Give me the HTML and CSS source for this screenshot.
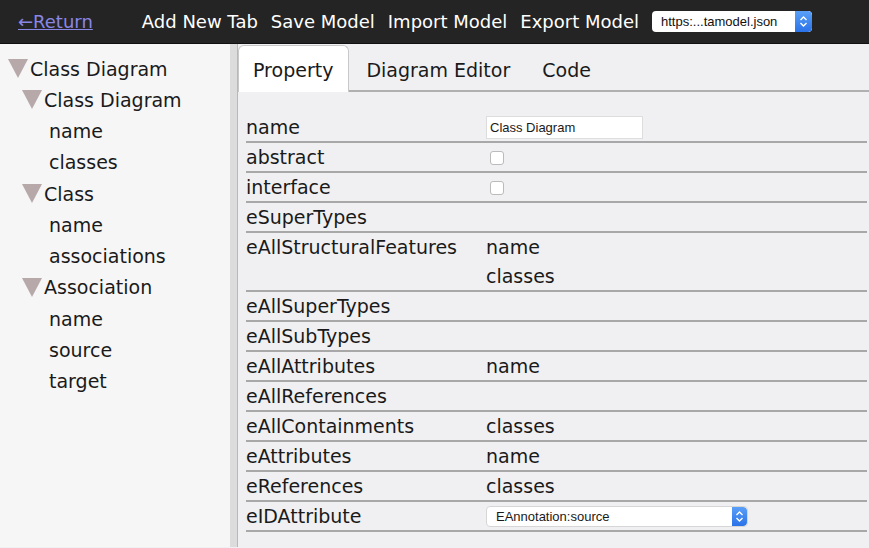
FILE: index.html
```html
<!DOCTYPE html>
<html>
<head>
<meta charset="utf-8">
<link rel="stylesheet" href="styles.css">
</head>
<body>
<header class="topbar">
  <a class="return" href="#">←Return</a>
  <nav class="menu">
    <span class="menu-item">Add New Tab</span>
    <span class="menu-item">Save Model</span>
    <span class="menu-item">Import Model</span>
    <span class="menu-item">Export Model</span>
  </nav>
  <div class="top-select">
    <span class="top-select-text">https:...tamodel.json</span>
    <span class="spin">
      <svg width="9" height="13" viewBox="0 0 9 13"><path d="M1.5 5 L4.5 2 L7.5 5 M1.5 8 L4.5 11 L7.5 8" fill="none" stroke="#fff" stroke-width="1.4"/></svg>
    </span>
  </div>
</header>
<div class="main">
  <aside class="sidebar">
    <div class="node lvl0"><svg class="tri" width="20" height="19" viewBox="0 0 20 19"><polygon points="0,0 20,0 10,19" fill="#b7a9a9"/></svg>Class Diagram</div>
    <div class="node lvl1"><svg class="tri" width="20" height="19" viewBox="0 0 20 19"><polygon points="0,0 20,0 10,19" fill="#b7a9a9"/></svg>Class Diagram</div>
    <div class="node leaf">name</div>
    <div class="node leaf">classes</div>
    <div class="node lvl1"><svg class="tri" width="20" height="19" viewBox="0 0 20 19"><polygon points="0,0 20,0 10,19" fill="#b7a9a9"/></svg>Class</div>
    <div class="node leaf">name</div>
    <div class="node leaf">associations</div>
    <div class="node lvl1"><svg class="tri" width="20" height="19" viewBox="0 0 20 19"><polygon points="0,0 20,0 10,19" fill="#b7a9a9"/></svg>Association</div>
    <div class="node leaf">name</div>
    <div class="node leaf">source</div>
    <div class="node leaf">target</div>
  </aside>
  <div class="divider"></div>
  <section class="content">
    <div class="tabs">
      <div class="tab active">Property</div>
      <div class="tab">Diagram Editor</div>
      <div class="tab">Code</div>
    </div>
    <table class="props">
      <tr><td class="k">name</td><td class="v"><div class="input">Class Diagram</div></td></tr>
      <tr><td class="k">abstract</td><td class="v"><span class="check"></span></td></tr>
      <tr><td class="k">interface</td><td class="v"><span class="check"></span></td></tr>
      <tr><td class="k">eSuperTypes</td><td class="v"></td></tr>
      <tr><td class="k top">eAllStructuralFeatures</td><td class="v"><div class="line">name</div><div class="line last">classes</div></td></tr>
      <tr><td class="k">eAllSuperTypes</td><td class="v"></td></tr>
      <tr><td class="k">eAllSubTypes</td><td class="v"></td></tr>
      <tr><td class="k">eAllAttributes</td><td class="v">name</td></tr>
      <tr><td class="k">eAllReferences</td><td class="v"></td></tr>
      <tr><td class="k">eAllContainments</td><td class="v">classes</td></tr>
      <tr><td class="k">eAttributes</td><td class="v">name</td></tr>
      <tr><td class="k">eReferences</td><td class="v">classes</td></tr>
      <tr><td class="k">eIDAttribute</td><td class="v"><div class="select"><span>EAnnotation:source</span><span class="spin small"><svg width="9" height="13" viewBox="0 0 9 13"><path d="M1.5 5 L4.5 2 L7.5 5 M1.5 8 L4.5 11 L7.5 8" fill="none" stroke="#fff" stroke-width="1.4"/></svg></span></div></td></tr>
    </table>
  </section>
</div>
</body>
</html>
```
FILE: styles.css
```css
* { box-sizing: border-box; }
html, body { margin: 0; padding: 0; }
body {
  width: 869px;
  height: 548px;
  overflow: hidden;
  font-family: "DejaVu Sans", "Noto Sans", sans-serif;
  background: #f0f0f2;
  color: #1a1a1a;
}
.topbar {
  height: 44px;
  background: #242424;
  border-bottom: 1px solid #111;
  display: flex;
  align-items: center;
  padding-left: 18px;
  color: #fff;
  font-size: 18px;
}
.return {
  color: #8a86e6;
  text-decoration: underline;
  margin-right: 49px;
}
.menu { display: flex; gap: 13px; }
.menu-item { color: #fff; }
.top-select {
  margin-left: 13px;
  width: 160px;
  height: 21px;
  background: #fff;
  border-radius: 4px;
  display: flex;
  align-items: center;
  justify-content: space-between;
  font-size: 13px;
  font-family: "Liberation Sans", sans-serif;
  color: #111;
  padding-left: 9px;
  overflow: hidden;
}
.spin {
  width: 17px;
  height: 100%;
  background: linear-gradient(#5aa0f8, #2a72e8);
  display: flex;
  align-items: center;
  justify-content: center;
  border-radius: 0 4px 4px 0;
}
.main {
  display: flex;
  height: 503px;
}
.sidebar {
  width: 230px;
  background: #f6f6f6;
  padding-top: 9px;
  font-size: 19px;
}
.node {
  height: 31.25px;
  display: flex;
  align-items: center;
  white-space: nowrap;
}
.tri { margin-right: 2px; flex: none; }
.lvl0 { padding-left: 8px; }
.lvl1 { padding-left: 22px; }
.leaf { padding-left: 49px; }
.divider {
  width: 8px;
  background: #dcdcdc;
  border-right: 1px solid #b8b8b8;
}
.content {
  flex: 1;
  background: #f0f0f2;
}
.tabs {
  display: flex;
  align-items: flex-end;
  height: 47px;
  margin-top: 1px;
  border-bottom: 2px solid #b0b0b0;
  font-size: 19px;
}
.tab {
  height: 45px;
  display: flex;
  align-items: center;
  padding: 0 15px 0;
  margin-bottom: -2px;
}
.tab + .tab { padding-left: 17px; }
.tab.active {
  background: #fff;
  border: 1px solid #c8c8c8;
  border-bottom: none;
  border-radius: 6px 6px 0 0;
  height: 47px;
  padding: 2px 15px 0 14px;
}
.props {
  border-collapse: collapse;
  margin-top: 20px;
  margin-left: 8px;
  width: 621px;
  font-size: 19px;
}
.props td {
  border-bottom: 2px solid #a8a8a8;
  padding: 0;
  height: 30px;
  vertical-align: middle;
  white-space: nowrap;
}
.props td.k { width: 240px; }
.props td.top { vertical-align: top; line-height: 29px; }
.props td .line { height: 29px; line-height: 29px; }
.props td .line.last { height: 28px; }
.input {
  width: 157px;
  height: 23px;
  background: #fff;
  border: 1px solid #ddd;
  font-size: 13px;
  font-family: "Liberation Sans", sans-serif;
  display: flex;
  align-items: center;
  padding-left: 3px;
  margin-top: 1px;
}
.check {
  display: block;
  width: 14px;
  height: 14px;
  margin-left: 4px;
  margin-top: 2px;
  border: 1px solid #bbb;
  border-radius: 3px;
  background: #fff;
}
.select {
  width: 262px;
  height: 21px;
  background: #fff;
  border: 1px solid #d6d6d6;
  border-radius: 4px;
  display: flex;
  align-items: center;
  justify-content: space-between;
  padding-left: 9px;
  font-size: 13px;
  font-family: "Liberation Sans", sans-serif;
  overflow: hidden;
}
.spin.small { width: 15px; }
```
